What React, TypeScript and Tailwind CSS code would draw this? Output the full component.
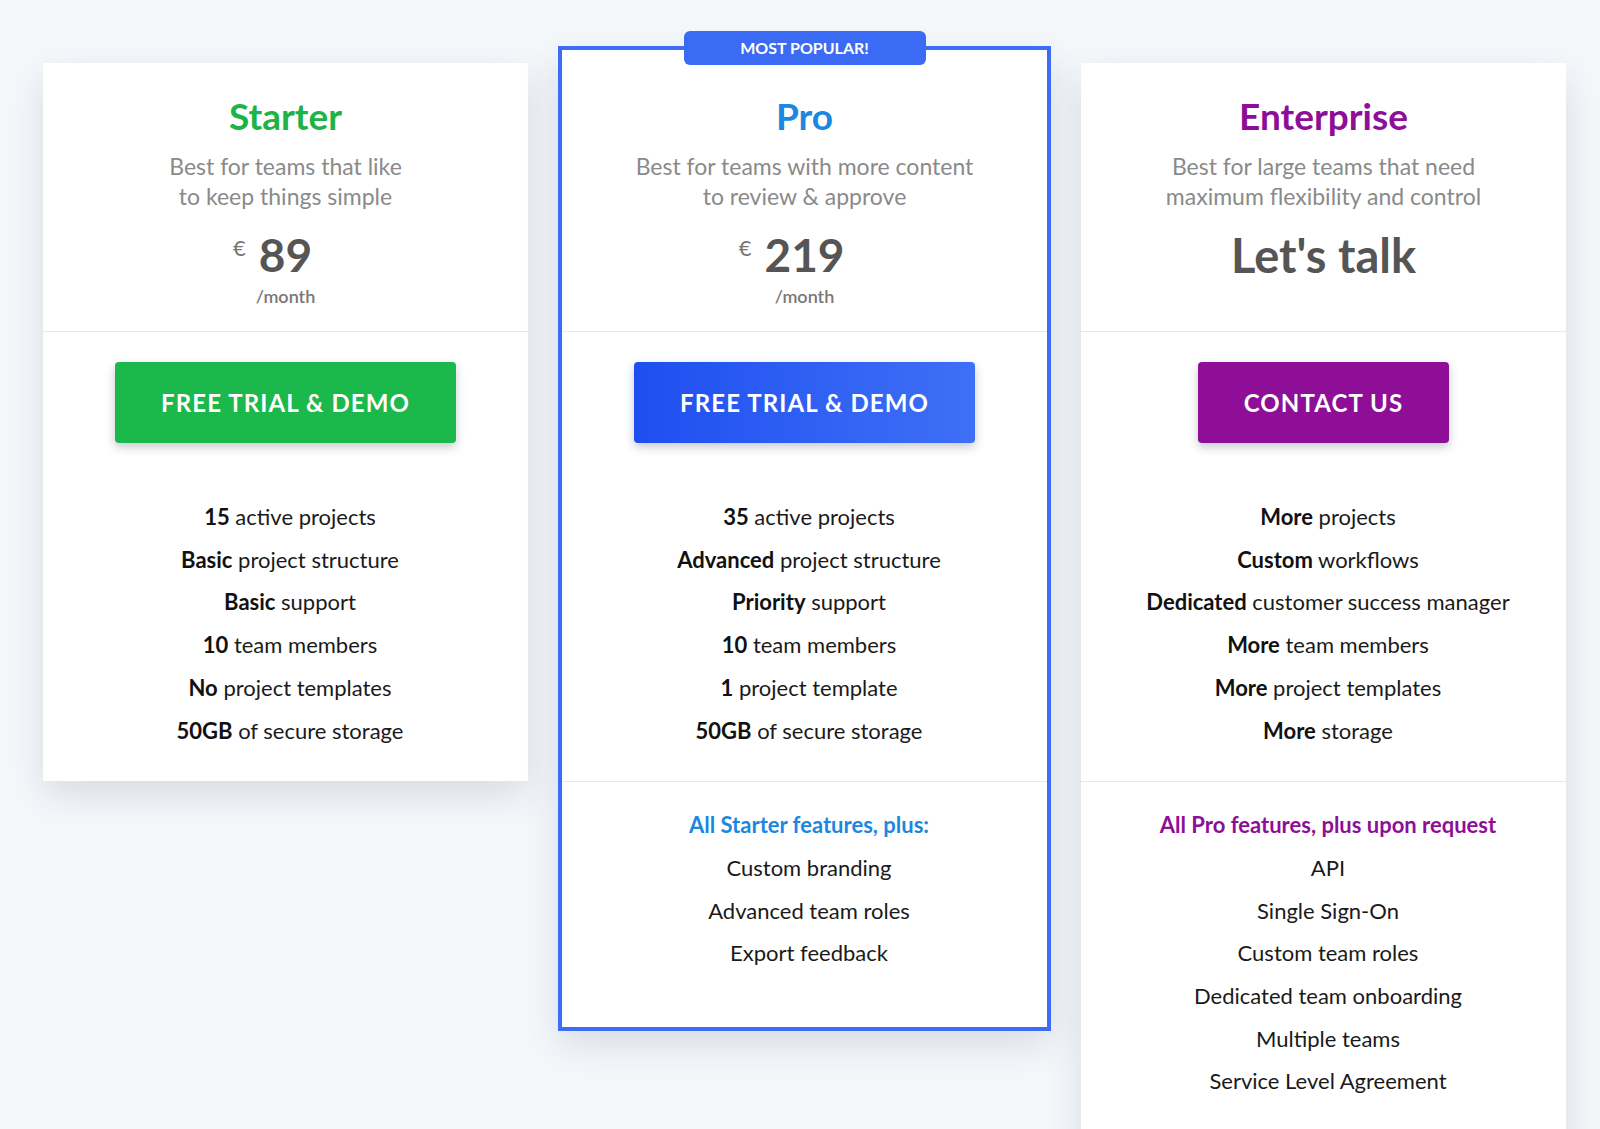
import React from 'react';

type Feature = { bold?: string; text: string };

interface Plan {
  name: string;
  titleColor: string;
  description: [string, string];
  price?: string;
  cta: string;
  buttonClass: string;
  features: Feature[];
  extrasTitle?: string;
  extrasColor?: string;
  extras?: string[];
  popular?: boolean;
}

const plans: Plan[] = [
  {
    name: 'Starter',
    titleColor: 'text-[#1cb347]',
    description: ['Best for teams that like', 'to keep things simple'],
    price: '89',
    cta: 'FREE TRIAL & DEMO',
    buttonClass: 'w-[341px] bg-[#1bb84c]',
    features: [
      { bold: '15', text: 'active projects' },
      { bold: 'Basic', text: 'project structure' },
      { bold: 'Basic', text: 'support' },
      { bold: '10', text: 'team members' },
      { bold: 'No', text: 'project templates' },
      { bold: '50GB', text: 'of secure storage' },
    ],
  },
  {
    name: 'Pro',
    titleColor: 'text-[#1c87e0]',
    description: ['Best for teams with more content', 'to review & approve'],
    price: '219',
    cta: 'FREE TRIAL & DEMO',
    buttonClass: 'w-[341px] bg-gradient-to-r from-[#1f4ef0] to-[#3f6ff6]',
    features: [
      { bold: '35', text: 'active projects' },
      { bold: 'Advanced', text: 'project structure' },
      { bold: 'Priority', text: 'support' },
      { bold: '10', text: 'team members' },
      { bold: '1', text: 'project template' },
      { bold: '50GB', text: 'of secure storage' },
    ],
    extrasTitle: 'All Starter features, plus:',
    extrasColor: 'text-[#1c87e0]',
    extras: ['Custom branding', 'Advanced team roles', 'Export feedback'],
    popular: true,
  },
  {
    name: 'Enterprise',
    titleColor: 'text-[#8e0e98]',
    description: ['Best for large teams that need', 'maximum flexibility and control'],
    cta: 'CONTACT US',
    buttonClass: 'w-[251px] bg-[#8e0e98]',
    features: [
      { bold: 'More', text: 'projects' },
      { bold: 'Custom', text: 'workflows' },
      { bold: 'Dedicated', text: 'customer success manager' },
      { bold: 'More', text: 'team members' },
      { bold: 'More', text: 'project templates' },
      { bold: 'More', text: 'storage' },
    ],
    extrasTitle: 'All Pro features, plus upon request',
    extrasColor: 'text-[#8e0e98]',
    extras: [
      'API',
      'Single Sign-On',
      'Custom team roles',
      'Dedicated team onboarding',
      'Multiple teams',
      'Service Level Agreement',
    ],
  },
];

const PlanCard: React.FC<{ plan: Plan }> = ({ plan }) => {
  const shell = plan.popular
    ? 'relative w-[493px] -mt-[17px] border-4 border-[#3d6cf6] pt-[13px]'
    : 'w-[485px]';

  return (
    <div className={`${shell} shrink-0 bg-white shadow-[0_14px_36px_rgba(40,50,80,0.14)]`}>
      {plan.popular && (
        <div className="absolute -top-[19px] left-1/2 -translate-x-1/2 w-[242px] h-[34px] rounded-md bg-[#3b6bf5] flex items-center justify-center text-white text-[16px] font-bold">
          MOST POPULAR!
        </div>
      )}

      {/* Header */}
      <div className="h-[268px] flex flex-col items-center pt-[31px] text-center">
        <h2 className={`text-[37px] leading-[43px] font-bold ${plan.titleColor}`}>{plan.name}</h2>
        <p className="mt-[14px] text-[23px] leading-[30px] text-[#8a8a8a]">
          {plan.description[0]}
          <br />
          {plan.description[1]}
        </p>
        {plan.price ? (
          <>
            <div className="relative mt-[18px] h-[52px] text-[#555]">
              <span className="absolute right-full top-[8px] mr-[13px] text-[22px] leading-none text-[#777]">€</span>
              <span className="text-[46px] leading-[52px] font-bold">{plan.price}</span>
            </div>
            <div className="mt-[3px] text-[18px] leading-[24px] text-[#777] font-semibold">/month</div>
          </>
        ) : (
          <div className="mt-[15px] text-[47px] leading-[58px] font-bold text-[#555]">Let's talk</div>
        )}
      </div>

      {/* CTA + features */}
      <div className="border-t border-[#e6e8ec] pt-[30px] pb-[29px] flex flex-col items-center">
        <button
          className={`${plan.buttonClass} h-[81px] rounded-[4px] text-white text-[24px] font-bold tracking-[1.1px] shadow-[0_4px_10px_rgba(30,40,70,0.25)]`}
        >
          {plan.cta}
        </button>
        <ul className="mt-[53px] pl-[9px] text-center text-[22px] leading-[42.7px] text-[#1a1a1a]">
          {plan.features.map((f, i) => (
            <li key={i}>
              {f.bold && <span className="font-bold text-[#111]">{f.bold}</span>} {f.text}
            </li>
          ))}
        </ul>
      </div>

      {plan.extras && (
        <div className="border-t border-[#e6e8ec] pt-[22px] pb-[52px] pl-[9px] text-center text-[22px] leading-[42.7px] text-[#1a1a1a]">
          <div className={`font-bold ${plan.extrasColor}`}>{plan.extrasTitle}</div>
          {plan.extras.map((e) => (
            <div key={e}>{e}</div>
          ))}
        </div>
      )}
    </div>
  );
};

export default function App() {
  return (
    <div
      className="min-h-screen h-[1129px] overflow-hidden bg-[#f5f8fb] flex items-start gap-[30px] pl-[43px] pt-[63px]"
      style={{ fontFamily: 'Lato, "Open Sans", sans-serif' }}
    >
      {plans.map((p) => (
        <PlanCard key={p.name} plan={p} />
      ))}
    </div>
  );
}
